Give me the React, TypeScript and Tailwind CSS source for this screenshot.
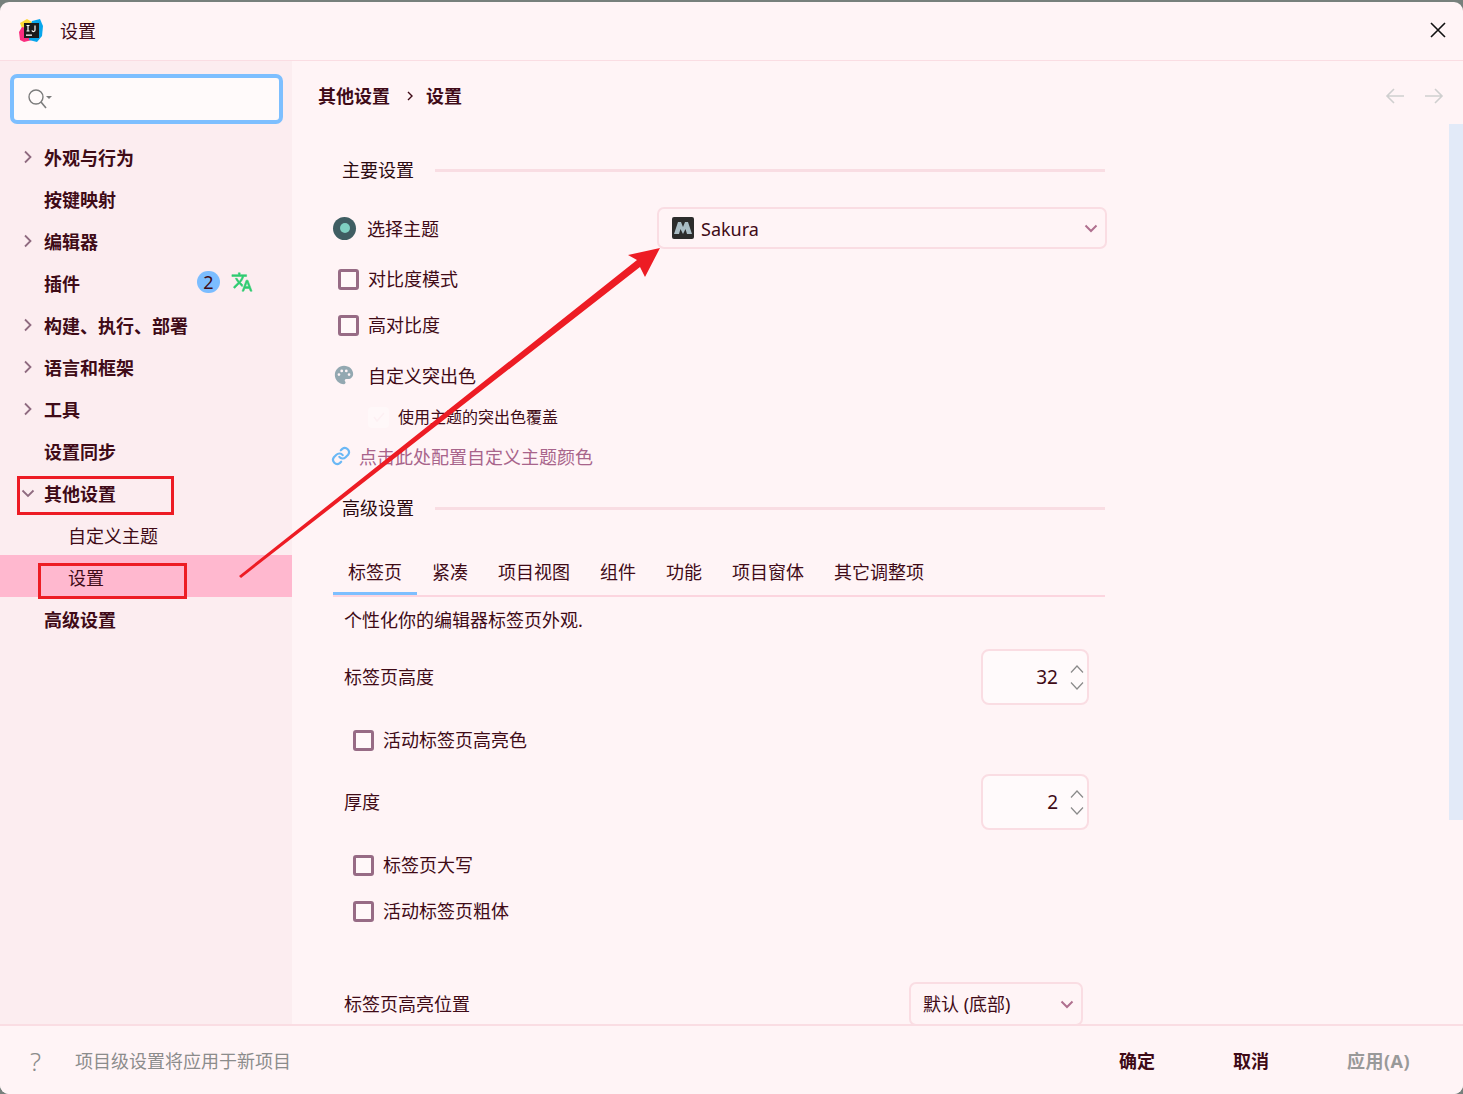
import React from "react";

const ink = "text-[#3f0b17]";

function Chev({ open = false }: { open?: boolean }) {
  return (
    <svg width="16" height="16" viewBox="0 0 16 16" fill="none" stroke="#8f6b80" strokeWidth="1.8" className="shrink-0">
      {open ? <polyline points="2.5,5.5 8,11 13.5,5.5" /> : <polyline points="5,2.5 10.5,8 5,13.5" />}
    </svg>
  );
}

function NavRow({ label, arrow, open, children }: { label: string; arrow?: boolean; open?: boolean; children?: React.ReactNode }) {
  return (
    <div className="h-[42px] flex items-center pl-[20px] pr-[39px]">
      <div className="w-[24px] shrink-0 pt-[2px]">{arrow ? <Chev open={open} /> : null}</div>
      <span className={`pt-[4px] text-[18px] font-bold ${ink}`}>{label}</span>
      {children}
    </div>
  );
}

function Check({ label, className }: { label: string; className: string }) {
  return (
    <div className={`flex items-center ${className}`}>
      <span className="w-[21px] h-[21px] rounded-[3px] border-[3px] border-[#976b85] bg-[#fff8f9] shrink-0" />
      <span className={`ml-[9px] text-[18px] ${ink}`}>{label}</span>
    </div>
  );
}

function Section({ label, className }: { label: string; className: string }) {
  return (
    <div className={`h-[30px] flex items-center pl-[9px] ${className}`}>
      <span className="w-[93px] text-[18px] text-[#2a0a10]">{label}</span>
      <span className="flex-1 h-[3px] bg-[#f9dde3]" />
    </div>
  );
}

function Spinner({ value }: { value: string }) {
  return (
    <div className="w-[108px] h-[56px] rounded-[8px] border-2 border-[#fadde3] bg-[#fffafb] flex items-center justify-end">
      <span className={`text-[19px] ${ink}`}>{value}</span>
      <div className="flex flex-col gap-[9px] ml-[12px] mr-[3px]">
        <svg width="14" height="8" viewBox="0 0 14 8" fill="none" stroke="#8a8a8a" strokeWidth="1.2"><polyline points="1,7.5 7,1 13,7.5" /></svg>
        <svg width="14" height="8" viewBox="0 0 14 8" fill="none" stroke="#8a8a8a" strokeWidth="1.2"><polyline points="1,0.5 7,7 13,0.5" /></svg>
      </div>
    </div>
  );
}

function SelChev() {
  return (
    <svg width="14" height="9" viewBox="0 0 14 9" fill="none" stroke="#b0708f" strokeWidth="2"><polyline points="1.5,1.5 7,7 12.5,1.5" /></svg>
  );
}

const tabs = ["标签页", "紧凑", "项目视图", "组件", "功能", "项目窗体", "其它调整项"];

export default function App() {
  return (
    <div className="relative w-[1463px] h-[1094px] overflow-hidden bg-[#77807c] pt-[2px] [font-family:'Noto_Sans','Noto_Sans_CJK_SC',sans-serif]">
      <div className="h-[1092px] rounded-t-[9px] rounded-b-[9px] bg-[#fff4f6] flex flex-col overflow-hidden">
        {/* title bar */}
        <div className="h-[59px] shrink-0 border-b border-[#fadde3] flex items-center pl-[18px] pr-[16px]">
          <svg width="26" height="26" viewBox="0 0 26 26" className="shrink-0">
            <polygon points="2,5 9,1 14,4 10,12 5,13" fill="#fdd835" />
            <polygon points="1,14 4,9 12,11 14,22 6,24 2,22" fill="#fb2d7f" />
            <polygon points="14,3 22,1 25,8 24,18 19,24 11,22 12,10" fill="#08a6ec" />
            <rect x="6" y="5" width="15" height="15" fill="#1a1a1a" />
            <rect x="8" y="16.5" width="6" height="1.3" fill="#fff" />
            <path d="M8.5 7.5h3M10 7.5v5.5M8.5 13h3M17 7.5v4.2a1.5 1.5 0 0 1-3 0.6" stroke="#fff" strokeWidth="1.2" fill="none" />
          </svg>
          <span className={`ml-[16px] text-[18px] ${ink}`}>设置</span>
          <svg width="18" height="18" viewBox="0 0 18 18" stroke="#111" strokeWidth="1.6" fill="none" className="ml-auto -mt-[2px]">
            <path d="M2 2 L16 16 M16 2 L2 16" />
          </svg>
        </div>

        {/* body */}
        <div className="flex-1 min-h-0 flex">
          {/* sidebar */}
          <aside className="w-[292px] shrink-0 bg-[#fcedf0] pt-[13px]">
            <div className="mx-[10px] w-[273px] h-[50px] rounded-[7px] border-[4px] border-[#7dbfff] bg-[#fffafa] flex items-center pl-[13px]">
              <svg width="26" height="22" viewBox="0 0 26 22" fill="none">
                <circle cx="9" cy="9" r="7" stroke="#7c7c7c" strokeWidth="1.4" />
                <path d="M14 14 L19 20" stroke="#7c7c7c" strokeWidth="1.6" />
                <polygon points="19,8 25,8 22,11" fill="#7c7c7c" />
              </svg>
            </div>
            <div className="mt-[11px]">
              <NavRow label="外观与行为" arrow />
              <NavRow label="按键映射" />
              <NavRow label="编辑器" arrow />
              <NavRow label="插件">
                <span className={`ml-auto w-[23px] h-[22px] rounded-full bg-[#7bbdff] flex items-center justify-center text-[18px] ${ink}`}>2</span>
                <svg width="22" height="22" viewBox="0 0 24 24" fill="#2fcc71" stroke="#2fcc71" strokeWidth="0.6" className="ml-[11px] shrink-0">
                  <path d="M12.87 15.07l-2.54-2.51.03-.03A17.52 17.52 0 0 0 14.07 6H17V4h-7V2H8v2H1v2h11.17C11.5 7.92 10.44 9.75 9 11.35 8.07 10.32 7.3 9.19 6.69 8h-2c.73 1.63 1.73 3.17 2.98 4.56l-5.09 5.02L4 19l5-5 3.11 3.11.76-2.04zM18.5 10h-2L12 22h2l1.12-3h4.75L21 22h2l-4.5-12zm-2.62 7l1.62-4.33L19.12 17h-3.24z" />
                </svg>
              </NavRow>
              <NavRow label="构建、执行、部署" arrow />
              <NavRow label="语言和框架" arrow />
              <NavRow label="工具" arrow />
              <NavRow label="设置同步" />
              <NavRow label="其他设置" arrow open />
              <div className="h-[42px] flex items-center pl-[68px]">
                <span className={`pt-[4px] text-[18px] ${ink}`}>自定义主题</span>
              </div>
              <div className="h-[42px] flex items-center pl-[68px] bg-[#ffb8cf]">
                <span className={`pt-[4px] text-[18px] ${ink}`}>设置</span>
              </div>
              <NavRow label="高级设置" />
            </div>
          </aside>

          {/* main */}
          <main className="flex-1 min-w-0 relative overflow-hidden">
            <div className="h-[70px] flex items-center pl-[26px] pr-[19px]">
              <span className={`text-[18px] font-bold ${ink}`}>其他设置</span>
              <svg width="8" height="12" viewBox="0 0 8 12" fill="none" stroke="#3f0b17" strokeWidth="1.4" className="ml-[16px]"><polyline points="2,2 6,6 2,10" /></svg>
              <span className={`ml-[12px] text-[18px] font-bold ${ink}`}>设置</span>
              <div className="ml-auto flex gap-[19px]">
                <svg width="20" height="16" viewBox="0 0 20 16" fill="none" stroke="#cfcfcf" strokeWidth="1.6"><path d="M19 8H2M9 1L2 8l7 7" /></svg>
                <svg width="20" height="16" viewBox="0 0 20 16" fill="none" stroke="#cfcfcf" strokeWidth="1.6"><path d="M1 8h17M11 1l7 7-7 7" /></svg>
              </div>
            </div>

            <div className="ml-[41px] w-[774px]">
              <div className="w-[772px]">
                <Section label="主要设置" className="mt-[24px]" />
              </div>

              <div className="mt-[22px] h-[42px] flex items-center">
                <span className="w-[23px] h-[23px] rounded-full bg-[#3f5d62] flex items-center justify-center shrink-0">
                  <span className="w-[10px] h-[10px] rounded-full bg-[#7fd0c2]" />
                </span>
                <span className={`ml-[11px] pt-[2px] w-[290px] text-[18px] ${ink}`}>选择主题</span>
                <div className="w-[450px] shrink-0 h-[42px] rounded-[7px] border-2 border-[#fadde3] flex items-center pl-[13px] pr-[7px]">
                  <svg width="22" height="22" viewBox="0 0 22 22" className="shrink-0">
                    <rect width="22" height="22" rx="2" fill="#2c2c2c" />
                    <polygon points="2,17 6,5 9,5 11,10 13,5 16,5 20,17 15,17 13.5,12 11,17 8.5,12 7,17" fill="#a9bcc4" />
                  </svg>
                  <span className={`ml-[7px] pt-[2px] text-[18px] ${ink}`}>Sakura</span>
                  <span className="ml-auto"><SelChev /></span>
                </div>
              </div>

              <div className="w-[772px]">
                <Check label="对比度模式" className="mt-[7px] h-[46px] pl-[5px]" />
                <Check label="高对比度" className="h-[46px] pl-[5px]" />

                <div className="mt-[5px] h-[46px] flex items-center">
                  <svg width="22" height="22" viewBox="0 0 24 24" fill="#93a8b1" className="shrink-0 -mt-[3px]">
                    <path fillRule="evenodd" d="M12 2C6.5 2 2 6.5 2 12s4.5 10 10 10c1 0 1.7-.8 1.7-1.7 0-.4-.2-.8-.4-1.1-.3-.3-.5-.7-.5-1.2 0-1 .8-1.7 1.7-1.7h2c3 0 5.5-2.5 5.5-5.5C22 5.9 17.5 2 12 2zM6.5 13a1.5 1.5 0 1 1 0-3 1.5 1.5 0 0 1 0 3zm3-4a1.5 1.5 0 1 1 0-3 1.5 1.5 0 0 1 0 3zm5 0a1.5 1.5 0 1 1 0-3 1.5 1.5 0 0 1 0 3zm3 4a1.5 1.5 0 1 1 0-3 1.5 1.5 0 0 1 0 3z" />
                  </svg>
                  <span className={`ml-[13px] text-[18px] ${ink}`}>自定义突出色</span>
                </div>

                <div className="h-[36px] flex items-center pl-[35px]">
                  <span className="w-[21px] h-[21px] rounded-[4px] bg-[#fff8f9] flex items-center justify-center shrink-0">
                    <svg width="14" height="12" viewBox="0 0 14 12" fill="none" stroke="#fdf0f3" strokeWidth="1.5"><polyline points="2,6 5,10 12,2" /></svg>
                  </span>
                  <span className={`ml-[9px] text-[16px] ${ink}`}>使用主题的突出色覆盖</span>
                </div>

                <div className="h-[44px] flex items-center">
                  <svg width="20" height="20" viewBox="0 0 24 24" fill="none" stroke="#6bb8f5" strokeWidth="2.6" strokeLinecap="round" className="shrink-0 -ml-[2px] -mt-[2px]">
                    <path d="M10 13a5 5 0 0 0 7.5.5l3-3a5 5 0 0 0-7-7l-1.7 1.7" />
                    <path d="M14 11a5 5 0 0 0-7.5-.5l-3 3a5 5 0 0 0 7 7l1.7-1.7" />
                  </svg>
                  <span className="ml-[8px] text-[18px] text-[#a8648b]">点击此处配置自定义主题颜色</span>
                </div>

                <Section label="高级设置" className="mt-[14px]" />

                <div className="mt-[28px] h-[46px] flex border-b-2 border-[#fcd5df]">
                  {tabs.map((t, i) => (
                    <div key={t} className={`relative px-[15px] h-[44px] flex items-center text-[18px] ${ink}`}>
                      <span className="-mt-[2px]">{t}</span>
                      {i === 0 ? <span className="absolute left-0 right-0 bottom-0 h-[3px] bg-[#7dbfff]" /> : null}
                    </div>
                  ))}
                </div>

                <div className="pl-[11px] pr-[16px]">
                  <div className={`h-[46px] flex items-center text-[18px] ${ink}`}>个性化你的编辑器标签页外观.</div>
                  <div className="mt-[6px] h-[56px] flex items-center justify-between">
                    <span className={`text-[18px] ${ink}`}>标签页高度</span>
                    <Spinner value="32" />
                  </div>
                  <Check label="活动标签页高亮色" className="mt-[12px] h-[46px] pl-[9px]" />
                  <div className="mt-[11px] h-[56px] flex items-center justify-between">
                    <span className={`text-[18px] ${ink}`}>厚度</span>
                    <Spinner value="2" />
                  </div>
                  <Check label="标签页大写" className="mt-[12px] h-[46px] pl-[9px]" />
                  <Check label="活动标签页粗体" className="h-[46px] pl-[9px]" />
                  <div className="mt-[49px] h-[42px] flex items-center justify-between pr-[6px]">
                    <span className={`text-[18px] ${ink}`}>标签页高亮位置</span>
                    <div className="w-[174px] h-[44px] rounded-[7px] border-2 border-[#fadde3] flex items-center pl-[12px] pr-[7px]">
                      <span className={`text-[18px] ${ink}`}>默认 (底部)</span>
                      <span className="ml-auto"><SelChev /></span>
                    </div>
                  </div>
                </div>
              </div>
            </div>

            {/* scrollbar */}
            <div className="absolute right-0 top-[63px] w-[14px] h-[696px] bg-[#e2eaf8]" />
          </main>
        </div>

        {/* footer */}
        <div className="h-[70px] shrink-0 border-t-2 border-[#fadde3] bg-[#fff4f6] relative flex items-center pl-[30px] pt-[3px]">
          <span className="w-[45px] text-[26px] font-light text-[#8c8c8c]">?</span>
          <span className="text-[18px] text-[#8c8c8c]">项目级设置将应用于新项目</span>
          <div className="ml-auto flex items-center text-[18px] font-bold pr-[52px]">
            <span className={ink}>确定</span>
            <span className={`ml-[78px] ${ink}`}>取消</span>
            <span className="ml-[78px] w-[64px] tracking-[0.5px] text-[#999999]">应用(A)</span>
          </div>
        </div>
      </div>

      {/* annotations */}
      <div className="absolute left-[17px] top-[476px] w-[157px] h-[39px] border-[3px] border-[#ed1c24]" />
      <div className="absolute left-[38px] top-[563px] w-[149px] h-[36px] border-[3px] border-[#ed1c24]" />
      <svg className="absolute left-0 top-0 pointer-events-none" width="1463" height="1094" viewBox="0 0 1463 1094">
        <polygon points="239,576 637,260 628,255 660,248 645,277 640,267 241,578" fill="#ed1c24" />
      </svg>
    </div>
  );
}
